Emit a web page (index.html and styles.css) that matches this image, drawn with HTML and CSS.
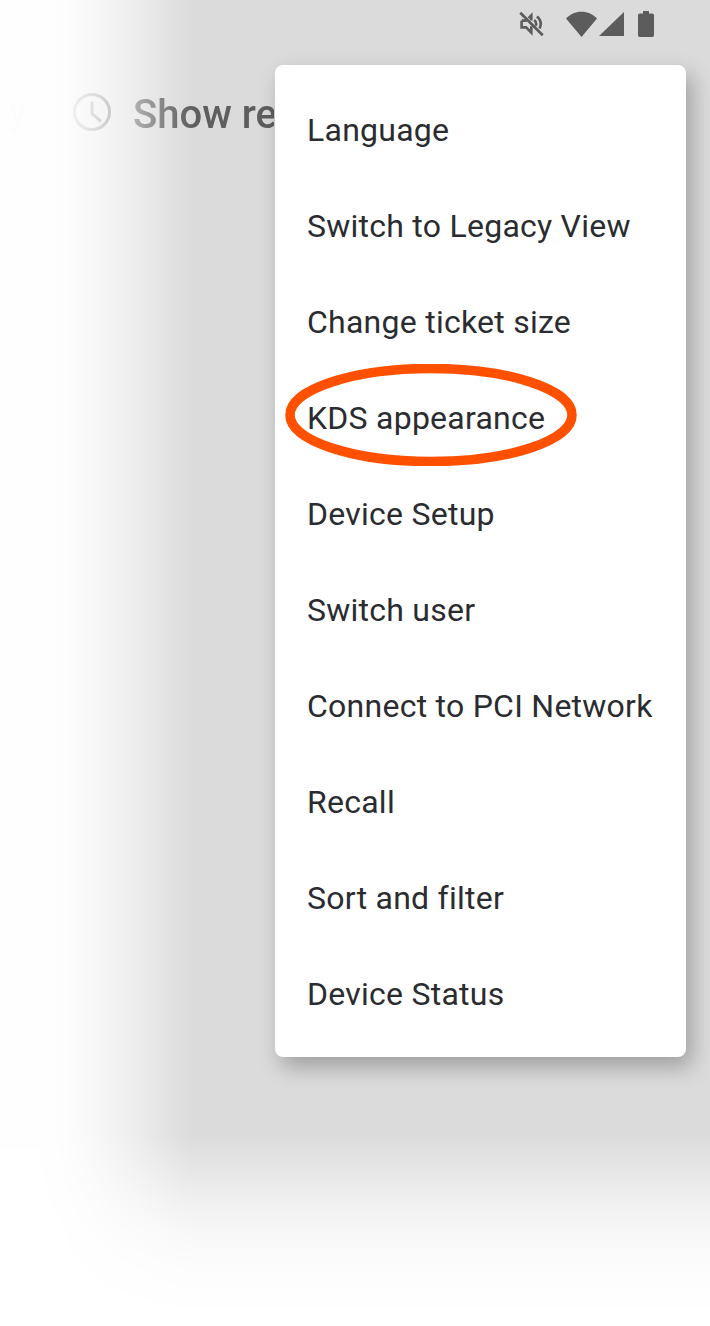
FILE: index.html
```html
<!DOCTYPE html>
<html lang="en">
<head>
<meta charset="utf-8">
<title>KDS menu</title>
<link rel="stylesheet" href="styles.css">
</head>
<body>
<div class="screen">
  <div class="app">
    <div class="statusbar">
      <svg class="ic-mute" viewBox="0 0 24 24" aria-hidden="true">
        <path d="M2.500 8.800v6.400h4.300l5 5v-6M11.800 8.600V3.800L9.200 6.400M7.400 8.800H2.500" fill="none" stroke="#5c5c5c" stroke-width="2.500"/>
        <path d="M14.600 8.200a5 5 0 0 1 1.500 5.600M17.200 4.700c3.600 3 4.500 7.400 2.600 11.700" fill="none" stroke="#5c5c5c" stroke-width="2.500"/>
        <path d="M1.200 1.200l21.600 21.600" stroke="#5c5c5c" stroke-width="2.500"/>
      </svg>
      <svg class="ic-wifi" viewBox="0 0 31 26" aria-hidden="true"><path d="M0 7.600C4 3.200 9.400 .8 15.500 .8S27 3.200 31 7.600L15.500 26z" fill="#5c5c5c"/></svg>
      <svg class="ic-signal" viewBox="0 0 25 24" aria-hidden="true"><path d="M25 0v24H0z" fill="#5c5c5c"/></svg>
      <svg class="ic-battery" viewBox="0 0 16 26" aria-hidden="true"><path d="M5 0h6v2.500h3.200A1.800 1.800 0 0 1 16 4.300v19.900a1.800 1.800 0 0 1-1.800 1.800H1.800A1.800 1.800 0 0 1 0 24.200V4.300a1.800 1.800 0 0 1 1.800-1.800H5z" fill="#5c5c5c"/></svg>
    </div>
    <div class="toolbar">
      <span class="tab-end">y</span>
      <svg class="ic-clock" viewBox="0 0 38 38" aria-hidden="true">
        <circle cx="19" cy="19" r="17.500" fill="none" stroke="#5a5a5a" stroke-width="3"/>
        <path d="M19 8.500V20.500l9 8" fill="none" stroke="#5a5a5a" stroke-width="3"/>
      </svg>
      <span class="toggle-label">Show re</span>
    </div>
  </div>

  <nav class="menu">
    <div class="menu-item">Language</div>
    <div class="menu-item">Switch to Legacy View</div>
    <div class="menu-item">Change ticket size</div>
    <div class="menu-item">KDS appearance</div>
    <div class="menu-item">Device Setup</div>
    <div class="menu-item">Switch user</div>
    <div class="menu-item">Connect to PCI Network</div>
    <div class="menu-item">Recall</div>
    <div class="menu-item">Sort and filter</div>
    <div class="menu-item">Device Status</div>
  </nav>

  <svg class="callout" viewBox="0 0 292 102" aria-hidden="true">
    <ellipse cx="146" cy="51" rx="141" ry="46.500" fill="none" stroke="#ff5000" stroke-width="9.500"/>
  </svg>
</div>
</body>
</html>
```

FILE: styles.css
```css
* {
  box-sizing: border-box;
}

html,
body {
  margin: 0;
  padding: 0;
  background: #ffffff;
}

body {
  font-family: Roboto, "Liberation Sans", sans-serif;
}

.screen {
  position: relative;
  width: 710px;
  height: 1326px;
  overflow: hidden;
  background: #ffffff;
}

.app {
  height: 100%;
  background: #dbdbdb;
  -webkit-mask-image:
    linear-gradient(to right, rgba(0,0,0,.015) 0, rgba(0,0,0,.015) 40px, rgba(0,0,0,.05) 62px, rgba(0,0,0,.18) 91px, rgba(0,0,0,.5) 136px, rgba(0,0,0,.93) 182px, #000 195px),
    linear-gradient(to bottom, #000 1133px, rgba(0,0,0,.73) 1167px, rgba(0,0,0,.43) 1200px, rgba(0,0,0,.2) 1233px, rgba(0,0,0,.08) 1267px, rgba(0,0,0,.02) 1300px, transparent 1326px);
  mask-image:
    linear-gradient(to right, rgba(0,0,0,.015) 0, rgba(0,0,0,.015) 40px, rgba(0,0,0,.05) 62px, rgba(0,0,0,.18) 91px, rgba(0,0,0,.5) 136px, rgba(0,0,0,.93) 182px, #000 195px),
    linear-gradient(to bottom, #000 1133px, rgba(0,0,0,.73) 1167px, rgba(0,0,0,.43) 1200px, rgba(0,0,0,.2) 1233px, rgba(0,0,0,.08) 1267px, rgba(0,0,0,.02) 1300px, transparent 1326px);
  -webkit-mask-composite: source-in;
  mask-composite: intersect;
}

.statusbar {
  display: flex;
  align-items: center;
  justify-content: flex-end;
  height: 48px;
  padding-right: 56px;
}

.ic-mute {
  width: 25px;
  height: 26px;
  margin-right: 22px;
}

.ic-wifi {
  width: 31px;
  height: 26px;
  margin-right: 2px;
}

.ic-signal {
  width: 25px;
  height: 24px;
  margin-right: 14px;
}

.ic-battery {
  width: 16px;
  height: 26px;
}

.toolbar {
  display: flex;
  align-items: center;
  height: 38px;
  margin-top: 45px;
  padding-left: 9px;
  color: #5e5e5e;
}

.tab-end {
  width: 64px;
  font-size: 36px;
  font-weight: 500;
}

.ic-clock {
  width: 38px;
  height: 38px;
  margin-right: 22px;
}

.toggle-label {
  width: 141px;
  overflow: hidden;
  padding-top: 6px;
  line-height: 44px;
  font-size: 40px;
  font-weight: 500;
  white-space: nowrap;
}

.menu {
  position: absolute;
  top: 65px;
  left: 275px;
  width: 411px;
  height: 992px;
  padding: 17px 0 15px;
  background: #ffffff;
  border-radius: 8px;
  box-shadow: 6px 10px 22px rgba(0, 0, 0, .28);
}

.menu-item {
  height: 96px;
  padding-left: 32px;
  line-height: 96px;
  font-size: 32px;
  letter-spacing: .25px;
  color: #2a2c30;
  white-space: nowrap;
}

.callout {
  position: absolute;
  top: 364px;
  left: 285px;
  width: 292px;
  height: 102px;
}
```
